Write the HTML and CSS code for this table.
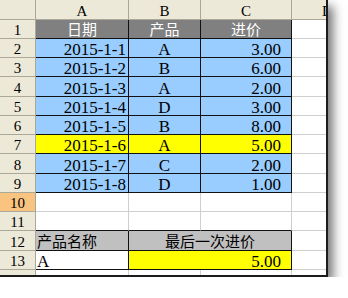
FILE: index.html
```html
<!DOCTYPE html>
<html lang="zh-CN">
<head>
<meta charset="utf-8">
<title>进价表</title>
<link rel="stylesheet" href="styles.css">
</head>
<body>
<div class="window">
  <div class="sheet">
    <div class="hd corner"></div>
    <div class="hd col">A</div>
    <div class="hd col">B</div>
    <div class="hd col">C</div>
    <div class="hd col">D</div>

    <div class="hd row">1</div>
    <div class="c title bl">日期</div>
    <div class="c title bl">产品</div>
    <div class="c title bl">进价</div>
    <div class="c"></div>

    <div class="hd row">2</div>
    <div class="c blue bl r date">2015-1-1</div>
    <div class="c blue bl m">A</div>
    <div class="c blue bl r num">3.00</div>
    <div class="c"></div>

    <div class="hd row">3</div>
    <div class="c blue bl r date">2015-1-2</div>
    <div class="c blue bl m">B</div>
    <div class="c blue bl r num">6.00</div>
    <div class="c"></div>

    <div class="hd row">4</div>
    <div class="c blue bl r date">2015-1-3</div>
    <div class="c blue bl m">A</div>
    <div class="c blue bl r num">2.00</div>
    <div class="c"></div>

    <div class="hd row">5</div>
    <div class="c blue bl r date">2015-1-4</div>
    <div class="c blue bl m">D</div>
    <div class="c blue bl r num">3.00</div>
    <div class="c"></div>

    <div class="hd row">6</div>
    <div class="c blue bl r date">2015-1-5</div>
    <div class="c blue bl m">B</div>
    <div class="c blue bl r num">8.00</div>
    <div class="c"></div>

    <div class="hd row">7</div>
    <div class="c yellow bl r date">2015-1-6</div>
    <div class="c yellow bl m">A</div>
    <div class="c yellow bl r num">5.00</div>
    <div class="c"></div>

    <div class="hd row">8</div>
    <div class="c blue bl r date">2015-1-7</div>
    <div class="c blue bl m">C</div>
    <div class="c blue bl r num">2.00</div>
    <div class="c"></div>

    <div class="hd row">9</div>
    <div class="c blue bl r date">2015-1-8</div>
    <div class="c blue bl m">D</div>
    <div class="c blue bl r num">1.00</div>
    <div class="c"></div>

    <div class="hd row sel">10</div>
    <div class="c"></div>
    <div class="c"></div>
    <div class="c"></div>
    <div class="c"></div>

    <div class="hd row">11</div>
    <div class="c bb"></div>
    <div class="c bb"></div>
    <div class="c bb"></div>
    <div class="c"></div>

    <div class="hd row">12</div>
    <div class="c grey bl cj l">产品名称</div>
    <div class="c grey bl cj m span2">最后一次进价</div>
    <div class="c"></div>

    <div class="hd row">13</div>
    <div class="c bl l">A</div>
    <div class="c yellow bl r num span2">5.00</div>
    <div class="c"></div>

    <div class="hd row">14</div>
    <div class="c"></div>
    <div class="c"></div>
    <div class="c"></div>
    <div class="c"></div>
  </div>
</div>
</body>
</html>
```

FILE: styles.css
```css
html, body {
  margin: 0;
  padding: 0;
  background: #ffffff;
}

.window {
  width: 326px;
  height: 275px;
  overflow: hidden;
  border-right: 2px solid #1c1c1c;
  border-bottom: 2px solid #1c1c1c;
  box-shadow: 5px 6px 10px rgba(0, 0, 0, 0.55);
  background: #ffffff;
}

.sheet {
  display: grid;
  grid-template-columns: 36px 93px 72px 91px 72px;
  grid-template-rows: 20px 19px 19px 19px 20px 19px 19px 19px 20px 19px 19px 19px 20px 19px 19px;
  font-family: "Liberation Serif", "Noto Sans CJK SC", serif;
  font-size: 17px;
  color: #000;
}

.sheet > div {
  box-sizing: border-box;
  border-right: 1px solid #cfcfcf;
  border-bottom: 1px solid #cfcfcf;
  display: flex;
  align-items: flex-end;
  line-height: 14px;
  white-space: nowrap;
}

.hd {
  background: #ece9d8;
  font-size: 15px;
  justify-content: center;
  border-right-color: #aca899 !important;
  border-bottom-color: #aca899 !important;
  padding-bottom: 1px;
}

.hd.sel {
  background: #f9c47f;
}

.c.bl {
  border-right-color: #111 !important;
  border-bottom-color: #111 !important;
}

.c.bb {
  border-bottom-color: #111 !important;
}

.title {
  background: #808080;
  color: #ffffff;
  justify-content: center;
  font-family: "Noto Sans CJK SC", sans-serif;
  font-size: 15px;
}

.cj {
  font-family: "Noto Sans CJK SC", sans-serif;
  font-size: 15px;
}

.title, .cj {
  align-items: center !important;
  line-height: 18px !important;
}

.blue { background: #99ccff; }
.yellow { background: #ffff00; }
.grey { background: #c0c0c0; }

.r { justify-content: flex-end; }
.m { justify-content: center; }
.l { justify-content: flex-start; padding-left: 1px; }

.date { padding-right: 2px; }
.num { padding-right: 10px; }

.span2 { grid-column: span 2; }
```
